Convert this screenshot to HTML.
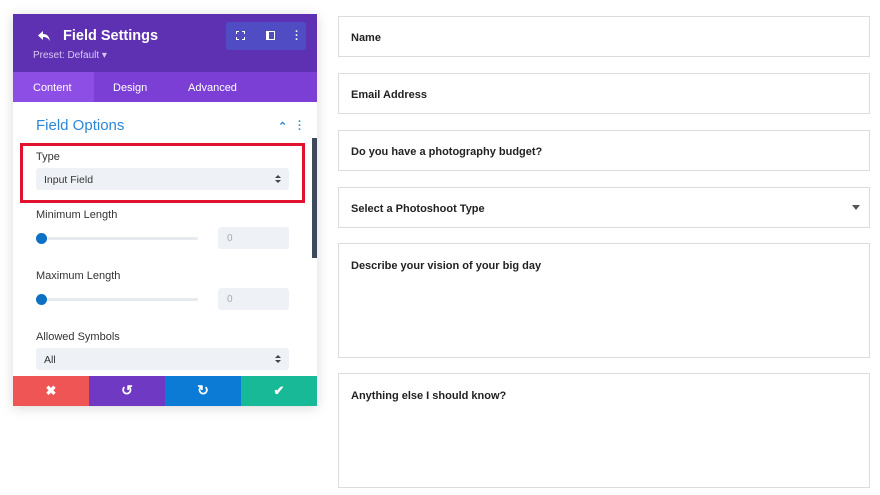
<!DOCTYPE html>
<html><head><style>
*{box-sizing:border-box;margin:0;padding:0}
body{width:880px;height:495px;background:#fff;font-family:"Liberation Sans",sans-serif;position:relative;overflow:hidden}
.a{position:absolute}
.f{position:absolute;left:338px;width:532px;border:1px solid #dcdcdc;font-size:11px;font-weight:bold;color:#222;padding-left:12px}
.lbl{position:absolute;left:36px;font-size:11px;color:#333}
.sel{position:absolute;left:36px;width:253px;height:22px;background:#eef2f6;border-radius:3px;font-size:10.5px;color:#333;padding:6px 0 0 8px}
.sel:after{content:"";position:absolute;right:8px;top:7px;border-left:3px solid transparent;border-right:3px solid transparent;border-bottom:3px solid #444}
.sel:before{content:"";position:absolute;right:8px;top:12px;border-left:3px solid transparent;border-right:3px solid transparent;border-top:3px solid #444}
.track{position:absolute;left:38px;width:160px;height:3px;background:#e6ebf0;border-radius:2px}
.dot{position:absolute;left:36px;width:11px;height:11px;border-radius:50%;background:#0c71c3}
.num{position:absolute;left:218px;width:71px;height:22px;background:#eef2f6;border-radius:3px;font-size:10px;color:#aab;padding:6px 0 0 9px}
</style></head><body>
<div class="a" style="left:13px;top:14px;width:304px;height:392px;background:#fff;box-shadow:0 2px 12px rgba(0,0,0,.15)"></div>
<div class="a" style="left:13px;top:14px;width:304px;height:58px;background:#5e31b2"></div>
<svg class="a" style="left:37px;top:30px" width="14" height="12" viewBox="0 0 14 12"><path d="M6 1 L1 5.5 L6 10 V7 C9 7 11 8 13 11 C12 6 10 4 6 4 Z" fill="#fff"/></svg>
<div class="a" style="left:63px;top:28px;color:#fff;font-size:14.5px;font-weight:bold">Field Settings</div>
<div class="a" style="left:33px;top:50px;color:#d9c8f3;font-size:10px">Preset: Default ▾</div>
<div class="a" style="left:226px;top:22px;width:80px;height:28px;background:#4f4cc4;border-radius:3px"></div>
<div class="a" style="left:236px;top:31px;width:9px;height:9px;border:1.5px dashed #fff"></div>
<div class="a" style="left:266px;top:31px;width:9px;height:9px;border:1.5px solid #fff;border-left-width:3px"></div>
<div class="a" style="left:295px;top:30px;color:#fff;font-size:11px;font-weight:bold;line-height:4px">·<br>·<br>·</div>
<div class="a" style="left:13px;top:72px;width:304px;height:30px;background:#7b3fd6"></div>
<div class="a" style="left:13px;top:72px;width:81px;height:30px;background:#8d4ee6"></div>
<div class="a" style="left:33px;top:82px;color:#fff;font-size:11px">Content</div>
<div class="a" style="left:113px;top:82px;color:#fff;font-size:11px">Design</div>
<div class="a" style="left:188px;top:82px;color:#fff;font-size:11px">Advanced</div>
<div class="a" style="left:36px;top:117px;color:#2b87da;font-size:15px">Field Options</div>
<div class="a" style="left:278px;top:120px;color:#2b87da;font-size:11px;font-weight:bold">⌃</div>
<div class="a" style="left:298px;top:120px;color:#2b87da;font-size:11px;font-weight:bold;line-height:4px">·<br>·<br>·</div>
<div class="a" style="left:312px;top:138px;width:5px;height:120px;background:#3e4a5a"></div>
<div class="a" style="left:20px;top:143px;width:285px;height:60px;border:3px solid #e0122f"></div>
<div class="lbl" style="top:151px">Type</div>
<div class="sel" style="top:168px">Input Field</div>
<div class="lbl" style="top:209px">Minimum Length</div>
<div class="track" style="top:237px"></div><div class="dot" style="top:233px"></div>
<div class="num" style="top:227px">0</div>
<div class="lbl" style="top:270px">Maximum Length</div>
<div class="track" style="top:298px"></div><div class="dot" style="top:294px"></div>
<div class="num" style="top:288px">0</div>
<div class="lbl" style="top:331px">Allowed Symbols</div>
<div class="sel" style="top:348px">All</div>
<div class="a" style="left:13px;top:376px;width:76px;height:30px;background:#ef5555;color:#fff;text-align:center;font-size:13px;font-weight:bold;padding-top:7px">✖</div>
<div class="a" style="left:89px;top:376px;width:76px;height:30px;background:#7039c4;color:#fff;text-align:center;font-size:14px;font-weight:bold;padding-top:6px">↺</div>
<div class="a" style="left:165px;top:376px;width:76px;height:30px;background:#0c7bd6;color:#fff;text-align:center;font-size:14px;font-weight:bold;padding-top:6px">↻</div>
<div class="a" style="left:241px;top:376px;width:76px;height:30px;background:#18b996;color:#fff;text-align:center;font-size:13px;font-weight:bold;padding-top:7px">✔</div>

<div class="f" style="top:16px;height:41px;padding-top:15px">Name</div>
<div class="f" style="top:73px;height:41px;padding-top:15px">Email Address</div>
<div class="f" style="top:130px;height:41px;padding-top:15px">Do you have a photography budget?</div>
<div class="f" style="top:187px;height:41px;padding-top:15px">Select a Photoshoot Type<span style="position:absolute;right:9px;top:17px;border-left:4px solid transparent;border-right:4px solid transparent;border-top:5px solid #555"></span></div>
<div class="f" style="top:243px;height:115px;padding-top:16px">Describe your vision of your big day</div>
<div class="f" style="top:373px;height:115px;padding-top:16px">Anything else I should know?</div>
</body></html>
